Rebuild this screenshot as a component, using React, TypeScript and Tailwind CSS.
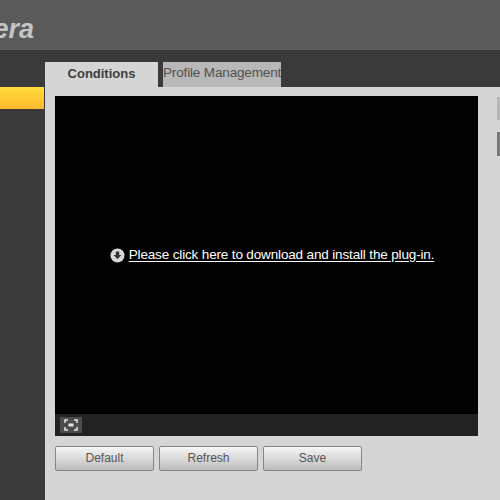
function ActionButton({ label }: { label: string }) {
  return (
    <button className="h-[25px] w-[99px] rounded-[2px] border border-[#858585] bg-gradient-to-b from-[#f6f6f6] to-[#bdbdbd] pb-[2px] text-[12px] text-[#555]">
      {label}
    </button>
  );
}

export default function App() {
  return (
    <div className="flex h-[500px] w-[500px] flex-col overflow-hidden bg-[#3a3a3a] font-['Liberation_Sans',Arial,sans-serif]">
      <header className="flex h-[50px] shrink-0 items-start overflow-hidden bg-[#5a5a5a]">
        <span className="ml-[-65px] mt-[11px] text-[27px] leading-[36px] font-bold italic text-[#c4c4c4]">
          Camera
        </span>
      </header>

      <div className="flex min-h-0 flex-1">
        <aside className="w-[45px] shrink-0 bg-[#3a3a3a] pt-[37px]">
          <div className="h-[22px] w-[44px] bg-gradient-to-b from-[#ffdc3c] to-[#fdb92c]" />
        </aside>

        <main className="flex min-w-0 flex-1 flex-col pt-[12px]">
          <div className="flex h-[25px] shrink-0">
            <div className="flex w-[113px] items-center justify-center bg-[#d5d5d5] pb-[2px] text-[13px] font-bold text-[#3d3d3d]">
              Conditions
            </div>
            <div className="ml-[5px] flex w-[118px] items-center overflow-hidden whitespace-nowrap bg-[#b8b8b8] pb-[2px] text-[13.5px] tracking-[-0.15px] text-[#505050]">
              Profile Management
            </div>
          </div>

          <div className="flex flex-1 bg-[#d5d5d5] pl-[10px] pt-[9px]">
            <div className="w-[423px] shrink-0">
              <div className="flex h-[318px] items-center justify-center bg-black pl-[11px]">
                <div className="flex items-center gap-[4px] text-[13.5px] tracking-[-0.15px] text-white">
                  <svg width="15" height="15" viewBox="0 0 15 15" className="shrink-0">
                    <circle cx="7.5" cy="7.5" r="7" fill="#d8d8d8" />
                    <path d="M5.8 3.5h3.4v3.6h2.1L7.5 11.3 3.7 7.1h2.1z" fill="#333" />
                  </svg>
                  <span className="underline underline-offset-2">Please click here to download and install the plug-in.</span>
                </div>
              </div>
              <div className="flex h-[22px] items-center bg-[#222] pl-[5px]">
                <div className="flex h-[16px] w-[22px] items-center justify-center bg-[#4c4c4c]">
                  <svg width="14" height="12" viewBox="0 0 14 12" fill="none" stroke="#e8e8e8" strokeWidth="1.5">
                    <path d="M1 4V1h3M10 1h3v3M1 8v3h3M10 11h3V8" />
                    <rect x="4.5" y="4.5" width="5" height="3" fill="#e8e8e8" stroke="none" />
                  </svg>
                </div>
              </div>
              <div className="mt-[10px] flex gap-[5px]">
                <ActionButton label="Default" />
                <ActionButton label="Refresh" />
                <ActionButton label="Save" />
              </div>
            </div>

            <div className="ml-[19px] flex flex-col gap-[12px] pt-px">
              <div className="h-[23px] w-[10px] bg-[#b5b5b5]" />
              <div className="h-[24px] w-[10px] bg-[#777]" />
            </div>
          </div>
        </main>
      </div>
    </div>
  );
}
